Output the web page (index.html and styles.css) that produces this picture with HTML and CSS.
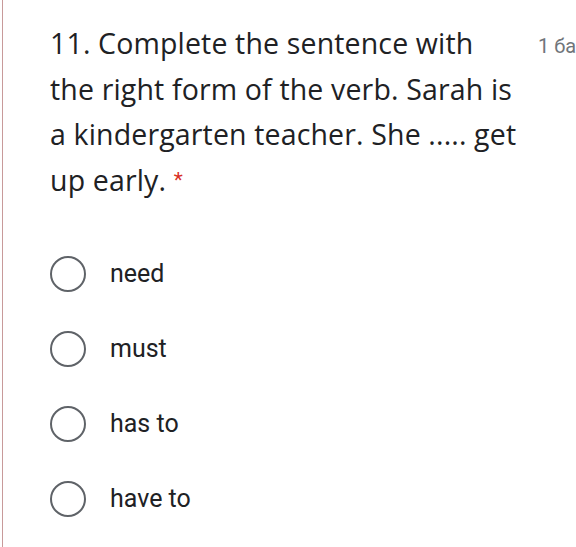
FILE: index.html
```html
<!DOCTYPE html>
<html>
<head>
<meta charset="utf-8">
<link rel="stylesheet" href="styles.css">
</head>
<body>
<div class="card">
  <div class="header">
    <div class="title">11. Complete the sentence with the right form of the verb. Sarah is a kindergarten teacher. She ..... get up early. <span class="req">*</span></div>
    <div class="points">1 балл</div>
  </div>
  <div class="options">
    <label class="opt"><span class="radio"></span><span class="label">need</span></label>
    <label class="opt"><span class="radio"></span><span class="label">must</span></label>
    <label class="opt"><span class="radio"></span><span class="label">has to</span></label>
    <label class="opt"><span class="radio"></span><span class="label">have to</span></label>
  </div>
</div>
</body>
</html>
```
FILE: styles.css
```css
html, body {
  margin: 0;
  padding: 0;
  background: #fff;
  overflow: hidden;
}
body {
  width: 576px;
  height: 547px;
  font-family: Roboto, "Liberation Sans", sans-serif;
  color: #202124;
}
.card {
  margin-left: 2px;
  border-left: 1.5px solid #c89a9a;
  height: 547px;
  box-sizing: border-box;
  padding: 21px 0 0 47px;
}
.header {
  display: flex;
  align-items: flex-start;
  gap: 16px;
  white-space: nowrap;
}
.title {
  width: 472px;
  white-space: normal;
  font-family: "Open Sans", Roboto, sans-serif;
  font-size: 28.5px;
  letter-spacing: 0.15px;
  line-height: 45.5px;
  flex-shrink: 0;
}
.req {
  color: #d93025;
  font-family: Roboto, sans-serif;
  font-size: 21px;
  vertical-align: 4px;
}
.points {
  font-size: 20px;
  color: #70757a;
  padding-top: 13px;
}
.options {
  display: flex;
  flex-direction: column;
  padding-top: 33px;
}
.opt {
  display: flex;
  align-items: center;
  height: 75px;
}
.radio {
  width: 32px;
  height: 32px;
  border: 2.5px solid #5f6368;
  border-radius: 50%;
  flex-shrink: 0;
}
.label {
  margin-left: 24px;
  font-size: 25px;
  color: #202124;
}
```
